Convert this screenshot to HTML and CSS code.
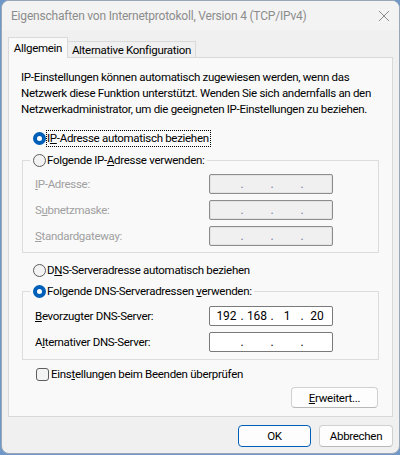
FILE: index.html
```html
<!DOCTYPE html>
<html lang="de">
<head>
<meta charset="utf-8">
<title>Eigenschaften von Internetprotokoll, Version 4 (TCP/IPv4)</title>
<link rel="stylesheet" href="styles.css">
</head>
<body>
<div class="window">
  <div class="titlebar">
    <span class="title">Eigenschaften von Internetprotokoll, Version 4 (TCP/IPv4)</span>
    <svg class="close" width="12" height="12" viewBox="0 0 12 12"><path d="M1 1 L11 11 M11 1 L1 11" stroke="#8a8a8a" stroke-width="1" fill="none"/></svg>
  </div>
  <div class="body">
    <div class="tabs">
      <div class="tab active">Allgemein</div>
      <div class="tab">Alternative Konfiguration</div>
    </div>
    <div class="panel">
      <p class="intro">IP-Einstellungen können automatisch zugewiesen werden, wenn das<br>Netzwerk diese Funktion unterstützt. Wenden Sie sich andernfalls an den<br>Netzwerkadministrator, um die geeigneten IP-Einstellungen zu beziehen.</p>

      <div class="option opt-auto-ip"><span class="radio checked"></span><span class="focus">I<u>P</u>-Adresse automatisch beziehen</span></div>

      <fieldset class="group g-ip">
        <legend class="option"><span class="radio"></span><span class="cap">Folgende IP-<u>A</u>dresse verwenden:</span></legend>
        <div class="row disabled"><span class="lbl"><u>I</u>P-Adresse:</span><div class="ip off"><span class="seg"></span><span class="dot">.</span><span class="seg"></span><span class="dot">.</span><span class="seg"></span><span class="dot">.</span><span class="seg"></span></div></div>
        <div class="row disabled"><span class="lbl">S<u>u</u>bnetzmaske:</span><div class="ip off"><span class="seg"></span><span class="dot">.</span><span class="seg"></span><span class="dot">.</span><span class="seg"></span><span class="dot">.</span><span class="seg"></span></div></div>
        <div class="row disabled"><span class="lbl"><u>S</u>tandardgateway:</span><div class="ip off"><span class="seg"></span><span class="dot">.</span><span class="seg"></span><span class="dot">.</span><span class="seg"></span><span class="dot">.</span><span class="seg"></span></div></div>
      </fieldset>

      <div class="option opt-auto-dns"><span class="radio"></span><span class="cap">D<u>N</u>S-Serveradresse automatisch beziehen</span></div>

      <fieldset class="group g-dns">
        <legend class="option"><span class="radio checked"></span><span class="cap">Folgende DNS-Serveradressen <u>v</u>erwenden:</span></legend>
        <div class="row"><span class="lbl"><u>B</u>evorzugter DNS-Server:</span><div class="ip"><span class="seg">192</span><span class="dot">.</span><span class="seg">168</span><span class="dot">.</span><span class="seg">1</span><span class="dot">.</span><span class="seg">20</span></div></div>
        <div class="row"><span class="lbl">A<u>l</u>ternativer DNS-Server:</span><div class="ip"><span class="seg"></span><span class="dot">.</span><span class="seg"></span><span class="dot">.</span><span class="seg"></span><span class="dot">.</span><span class="seg"></span></div></div>
      </fieldset>

      <div class="option opt-check"><span class="checkbox"></span><span class="cap">Eins<u>t</u>ellungen beim Beenden überprüfen</span></div>

      <div class="panel-actions"><button class="btn btn-adv"><u>E</u>rweitert...</button></div>
    </div>
    <div class="footer">
      <button class="btn btn-ok">OK</button>
      <button class="btn btn-cancel">Abbrechen</button>
    </div>
  </div>
</div>
</body>
</html>
```

FILE: styles.css
```css
* { box-sizing: border-box; }

html, body {
  margin: 0;
  padding: 0;
}

body {
  width: 400px;
  height: 455px;
  background: #6f98c8;
  font-family: Roboto, "Noto Sans", sans-serif;
  font-size: 11.5px;
  letter-spacing: -0.3px;
  color: #000;
  overflow: hidden;
}

.window {
  margin-left: 1px;
  width: 399px;
  height: 454px;
  background: #f0f0f0;
  border: 1px solid #9aa7b8;
  border-radius: 8px;
  overflow: hidden;
  display: flex;
  flex-direction: column;
}

.titlebar {
  height: 29px;
  flex: none;
  background: #f3f3f3;
  display: flex;
  align-items: center;
  justify-content: space-between;
  padding: 0 9px 0 9px;
}

.title {
  color: #8c8c8c;
  font-size: 12px;
  letter-spacing: -0.2px;
  line-height: 16px;
  white-space: nowrap;
}

.close {
  display: block;
}

.body {
  padding: 7px 6px 0 6px;
  display: flex;
  flex-direction: column;
}

.tabs {
  height: 20px;
  display: flex;
  align-items: flex-end;
}

.tab {
  height: 16px;
  width: 128px;
  border-top: 1px solid #d9d9d9;
  border-right: 1px solid #d9d9d9;
  background: #f0f0f0;
  text-align: center;
  line-height: 15px;
  padding-top: 1px;
  white-space: nowrap;
}

.tab.active {
  position: relative;
  z-index: 1;
  height: 21px;
  width: 60px;
  margin-bottom: -1px;
  border-left: 1px solid #d9d9d9;
  background: #f9f9f9;
  line-height: 18px;
  padding-top: 1px;
}

.panel {
  height: 360px;
  width: 385px;
  background: #f9f9f9;
  border: 1px solid #d9d9d9;
  padding: 11px 0 0 0;
  display: flex;
  flex-direction: column;
}

.intro {
  margin: 0 0 0 12px;
  line-height: 16px;
  white-space: nowrap;
}

.option {
  display: flex;
  align-items: center;
  height: 16px;
  line-height: 16px;
  white-space: nowrap;
}

.opt-auto-ip { margin: 13px 0 0 24px; }
.opt-auto-dns { margin: 9px 0 0 24px; }
.opt-check { margin: 6px 0 0 27px; }

.radio {
  flex: none;
  width: 13px;
  height: 13px;
  border-radius: 50%;
  border: 1px solid #5d5d5d;
  background: #f3f3f3;
  margin-right: 1px;
}

.radio.checked {
  border: 4px solid #005fb8;
  background: #ffffff;
}

.checkbox {
  flex: none;
  width: 13px;
  height: 13px;
  border-radius: 3px;
  border: 1px solid #5d5d5d;
  background: #f3f3f3;
  margin-right: 2px;
}

.focus {
  outline: 1px dotted #000;
  outline-offset: 0;
  padding: 0 1px 0 0;
  line-height: 15px;
}

.group {
  margin: 6px 0 0 13px;
  width: 357px;
  padding: 6px 0 6px 12px;
  border: 1px solid #dcdcdc;
  min-width: 0;
  display: flex;
  flex-direction: column;
  gap: 6px;
}

.g-ip { margin-top: 6px; }
.g-dns { margin-top: 5px; padding-top: 7px; padding-bottom: 7px; }

.group legend {
  margin-left: -5px;
  padding: 0 2px 0 3px;
}

.row {
  display: flex;
  align-items: center;
  height: 20px;
}

.lbl {
  width: 174px;
  flex: none;
}

.row.disabled .lbl { color: #a0a0a0; }

.ip {
  width: 124px;
  height: 20px;
  border: 1px solid #7a7a7a;
  border-radius: 2px;
  background: #ffffff;
  display: flex;
  align-items: center;
  padding-left: 4px;
  line-height: 16px;
  font-size: 12px;
  letter-spacing: 0;
}

.ip.off {
  background: #f0f0f0;
  border-color: #8d8d8d;
  box-shadow: inset 0 0 0 1px #e3e3e3;
}

.seg {
  width: 24px;
  text-align: center;
}

.seg:first-child { width: 25px; }

.dot {
  width: 6px;
  text-align: center;
}

.ip.off .dot { color: #7a7aa0; }

.panel-actions {
  display: flex;
  justify-content: flex-end;
  margin: 5px 14px 0 0;
}

.btn {
  font-family: inherit;
  font-size: inherit;
  letter-spacing: inherit;
  color: #000;
  height: 21px;
  padding: 0;
  border: 1px solid #d0d0d0;
  border-bottom-color: #b8b8b8;
  border-radius: 4px;
  background: #fdfdfd;
  line-height: 18px;
}

.btn-adv { width: 87px; }

.footer {
  display: flex;
  justify-content: flex-end;
  gap: 8px;
  margin-top: 8px;
}

.btn-ok {
  width: 73px;
  height: 22px;
  border: 1px solid #005fb8;
}

.btn-cancel {
  width: 74px;
  height: 22px;
}
```
